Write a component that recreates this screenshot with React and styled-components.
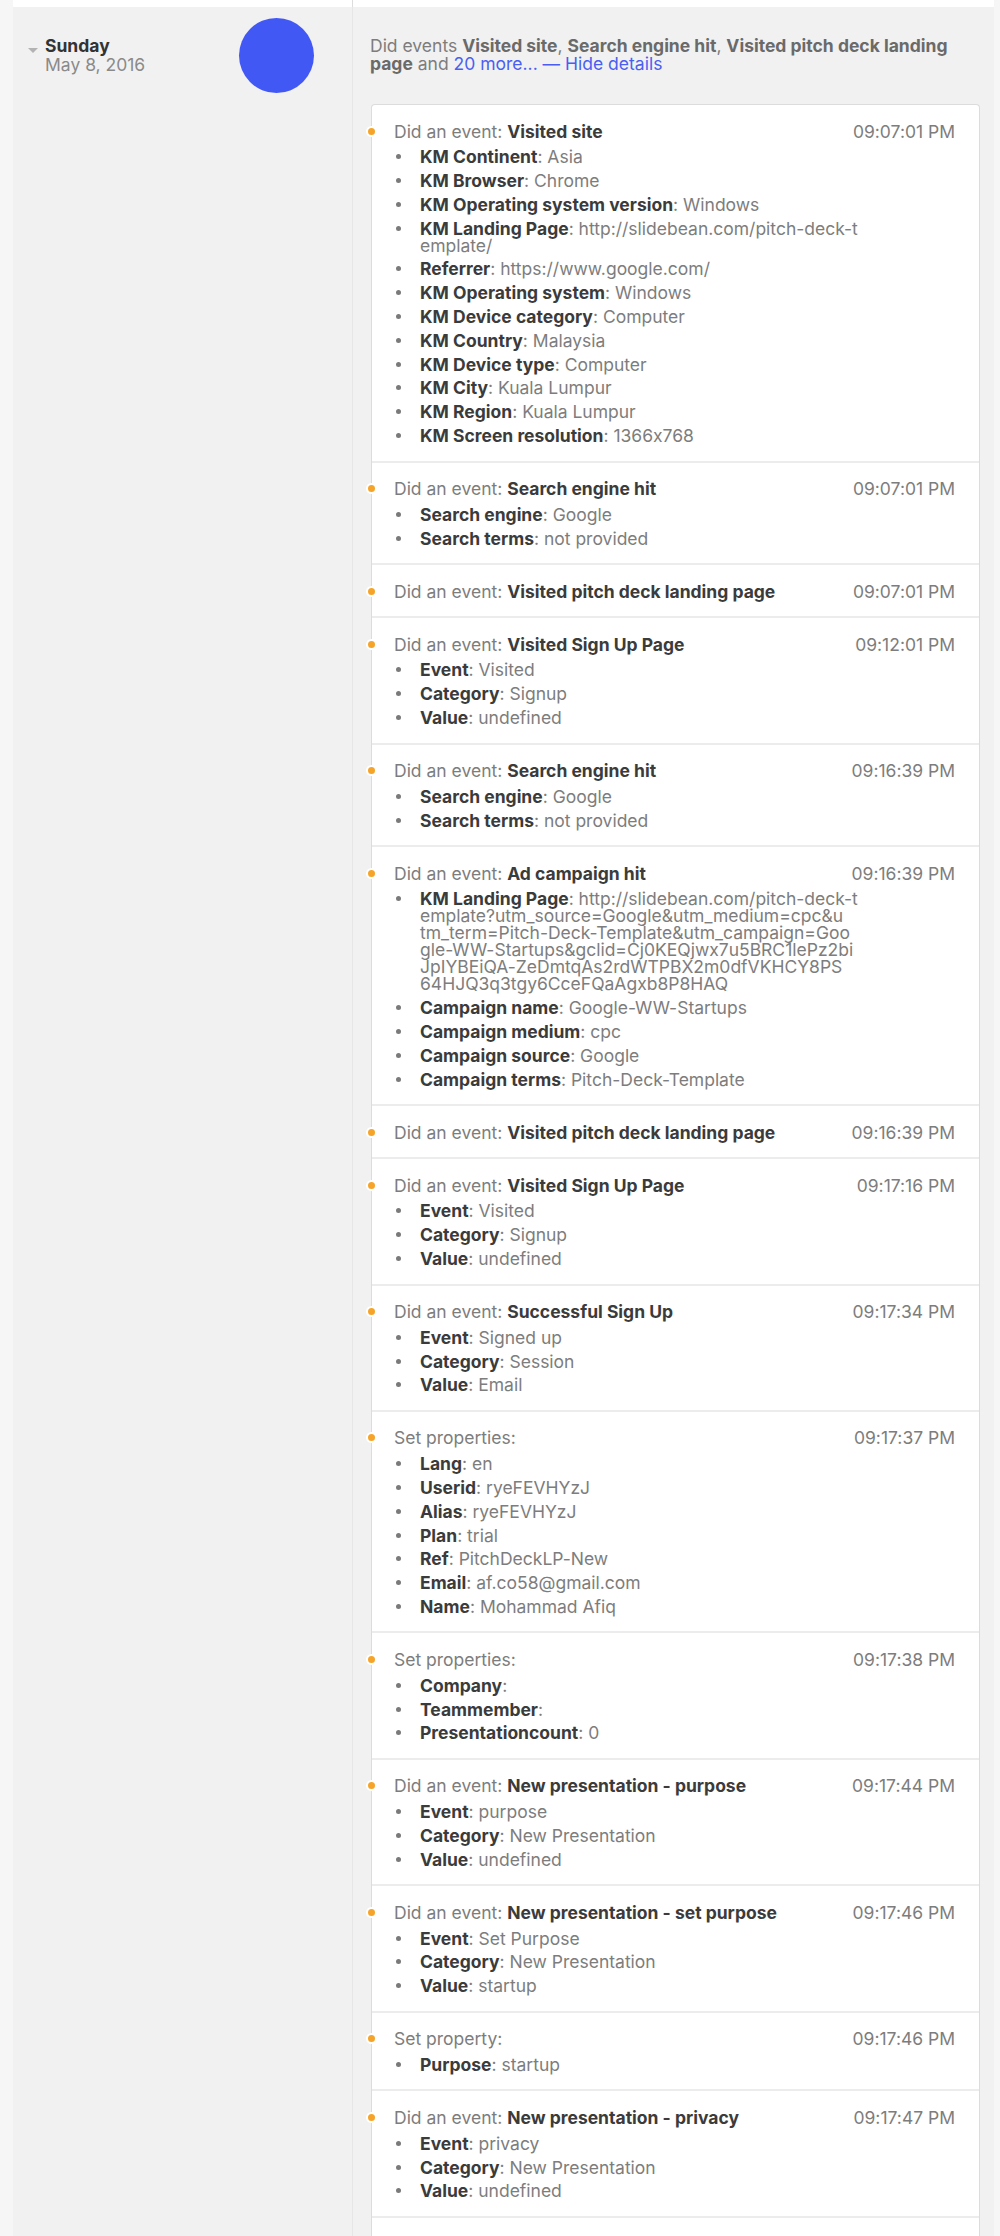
import styled, { createGlobalStyle } from "styled-components";

const GlobalStyle = createGlobalStyle`
  body {
    margin: 0;
    background: #f6f6f6;
    font-family: Inter, "Open Sans", sans-serif;
    font-feature-settings: "calt" 0;
    -webkit-font-smoothing: antialiased;
  }
`;

const Page = styled.div`
  padding: 0 6px 0 13px;
`;

const Row = styled.div`
  display: grid;
  grid-template-columns: 339px 1fr;
  background: ${(props) => (props.$white ? "#ffffff" : "#f1f1f1")};
  min-height: ${(props) => (props.$white ? "7px" : "auto")};
`;

const LeftCol = styled.div`
  display: flex;
  align-items: flex-start;
  padding: 11px 0 0 15px;
`;

const RightCol = styled.div`
  border-left: 1px solid ${(props) => (props.$white ? "#dddddd" : "#e6e6e6")};
  padding: ${(props) => (props.$white ? "0" : "30px 14px 0 17px")};
`;

const Caret = styled.span`
  width: 0;
  height: 0;
  margin: 30px 7px 0 0;
  border-left: 5px solid transparent;
  border-right: 5px solid transparent;
  border-top: 5px solid #b3b3b3;
`;

const DayLabel = styled.div`
  margin-top: 18px;
  font-size: 17.5px;
  line-height: 19px;
`;

const DayName = styled.div`
  font-weight: 700;
  color: #333333;
`;

const DayDate = styled.div`
  color: #8a8a8a;
`;

const Avatar = styled.div`
  width: 75px;
  height: 75px;
  border-radius: 50%;
  background: #4258f5;
  margin: 0 38px 0 auto;
`;

const Summary = styled.div`
  font-size: 17.5px;
  line-height: 18px;
  color: #7d7d7d;

  strong {
    color: #6a6a6a;
    font-weight: 700;
  }
`;

const Link = styled.a`
  color: #4a5ff2;
  text-decoration: none;
`;

const Card = styled.div`
  margin: 31px 0 0 1px;
  background: #ffffff;
  border: 1px solid #dcdcdc;
  border-bottom: none;
  border-radius: 4px 4px 0 0;
  padding-bottom: 40px;
`;

const Event = styled.div`
  position: relative;
  padding: 17.5px 24px 16.5px 22px;
  border-bottom: 2px solid #ececec;
`;

const Dot = styled.span`
  position: absolute;
  left: -6.5px;
  top: 20.5px;
  width: 7px;
  height: 7px;
  border: 2px solid #ffffff;
  border-radius: 50%;
  background: #f6a429;
`;

const Header = styled.div`
  display: flex;
  justify-content: space-between;
  font-size: 17.5px;
  line-height: 17px;
  color: #7d7d7d;

  strong {
    color: #3b3b3b;
    font-weight: 700;
  }
`;

const Time = styled.span`
  white-space: nowrap;
`;

const PropList = styled.ul`
  display: flex;
  flex-direction: column;
  gap: 6.8px;
  list-style: none;
  margin: 0;
  padding: 8.8px 0 0 26px;
  max-width: 520px;
`;

const Prop = styled.li`
  position: relative;
  font-size: 17.5px;
  line-height: 17px;
  color: #7d7d7d;

  &::before {
    content: "";
    position: absolute;
    left: -24.5px;
    top: 6px;
    width: 5px;
    height: 5px;
    border-radius: 50%;
    background: #7a7a7a;
  }

  strong {
    color: #3b3b3b;
    font-weight: 700;
  }
`;

const statsUp = [
  ["Event", "Visited"],
  ["Category", "Signup"],
  ["Value", "undefined"],
];

const search = [
  ["Search engine", "Google"],
  ["Search terms", "not provided"],
];

const events = [
  {
    name: "Visited site",
    time: "09:07:01 PM",
    props: [
      ["KM Continent", "Asia"],
      ["KM Browser", "Chrome"],
      ["KM Operating system version", "Windows"],
      ["KM Landing Page", ["http://slidebean.com/pitch-deck-t", "emplate/"]],
      ["Referrer", "https://www.google.com/"],
      ["KM Operating system", "Windows"],
      ["KM Device category", "Computer"],
      ["KM Country", "Malaysia"],
      ["KM Device type", "Computer"],
      ["KM City", "Kuala Lumpur"],
      ["KM Region", "Kuala Lumpur"],
      ["KM Screen resolution", "1366x768"],
    ],
  },
  { name: "Search engine hit", time: "09:07:01 PM", props: search },
  { name: "Visited pitch deck landing page", time: "09:07:01 PM", props: [] },
  { name: "Visited Sign Up Page", time: "09:12:01 PM", props: statsUp },
  { name: "Search engine hit", time: "09:16:39 PM", props: search },
  {
    name: "Ad campaign hit",
    time: "09:16:39 PM",
    props: [
      [
        "KM Landing Page",
        [
          "http://slidebean.com/pitch-deck-t",
          "emplate?utm_source=Google&utm_medium=cpc&u",
          "tm_term=Pitch-Deck-Template&utm_campaign=Goo",
          "gle-WW-Startups&gclid=Cj0KEQjwx7u5BRC1lePz2bi",
          "JpIYBEiQA-ZeDmtqAs2rdWTPBX2m0dfVKHCY8PS",
          "64HJQ3q3tgy6CceFQaAgxb8P8HAQ",
        ],
      ],
      ["Campaign name", "Google-WW-Startups"],
      ["Campaign medium", "cpc"],
      ["Campaign source", "Google"],
      ["Campaign terms", "Pitch-Deck-Template"],
    ],
  },
  { name: "Visited pitch deck landing page", time: "09:16:39 PM", props: [] },
  { name: "Visited Sign Up Page", time: "09:17:16 PM", props: statsUp },
  {
    name: "Successful Sign Up",
    time: "09:17:34 PM",
    props: [
      ["Event", "Signed up"],
      ["Category", "Session"],
      ["Value", "Email"],
    ],
  },
  {
    set: "Set properties:",
    time: "09:17:37 PM",
    props: [
      ["Lang", "en"],
      ["Userid", "ryeFEVHYzJ"],
      ["Alias", "ryeFEVHYzJ"],
      ["Plan", "trial"],
      ["Ref", "PitchDeckLP-New"],
      ["Email", "af.co58@gmail.com"],
      ["Name", "Mohammad Afiq"],
    ],
  },
  {
    set: "Set properties:",
    time: "09:17:38 PM",
    props: [
      ["Company", ""],
      ["Teammember", ""],
      ["Presentationcount", "0"],
    ],
  },
  {
    name: "New presentation - purpose",
    time: "09:17:44 PM",
    props: [
      ["Event", "purpose"],
      ["Category", "New Presentation"],
      ["Value", "undefined"],
    ],
  },
  {
    name: "New presentation - set purpose",
    time: "09:17:46 PM",
    props: [
      ["Event", "Set Purpose"],
      ["Category", "New Presentation"],
      ["Value", "startup"],
    ],
  },
  { set: "Set property:", time: "09:17:46 PM", props: [["Purpose", "startup"]] },
  {
    name: "New presentation - privacy",
    time: "09:17:47 PM",
    props: [
      ["Event", "privacy"],
      ["Category", "New Presentation"],
      ["Value", "undefined"],
    ],
  },
];

// long values are kept as the lines they wrap to in the original
const Value = ({ value }) => {
  if (!Array.isArray(value)) return value ? ` ${value}` : "";
  return value.map((line, i) => (
    <span key={i}>
      {i > 0 && <br />}
      {i === 0 ? ` ${line}` : line}
    </span>
  ));
};

const EventItem = ({ ev }) => (
  <Event>
    <Dot />
    <Header>
      <span>
        {ev.set ? ev.set : (
          <>
            Did an event: <strong>{ev.name}</strong>
          </>
        )}
      </span>
      <Time>{ev.time}</Time>
    </Header>
    {ev.props.length > 0 && (
      <PropList>
        {ev.props.map(([label, value], i) => (
          <Prop key={i}>
            <strong>{label}</strong>:<Value value={value} />
          </Prop>
        ))}
      </PropList>
    )}
  </Event>
);

export default function App() {
  return (
    <>
      <GlobalStyle />
      <Page>
        <Row $white>
          <div />
          <RightCol $white />
        </Row>
        <Row>
          <LeftCol>
            <Caret />
            <DayLabel>
              <DayName>Sunday</DayName>
              <DayDate>May 8, 2016</DayDate>
            </DayLabel>
            <Avatar />
          </LeftCol>
          <RightCol>
            <Summary>
              Did events <strong>Visited site</strong>, <strong>Search engine hit</strong>,{" "}
              <strong>Visited pitch deck landing</strong>
              <br />
              <strong>page</strong> and <Link href="#">20 more...</Link>{" "}
              <Link href="#">— Hide details</Link>
            </Summary>
            <Card>
              {events.map((ev, i) => (
                <EventItem key={i} ev={ev} />
              ))}
            </Card>
          </RightCol>
        </Row>
      </Page>
    </>
  );
}
